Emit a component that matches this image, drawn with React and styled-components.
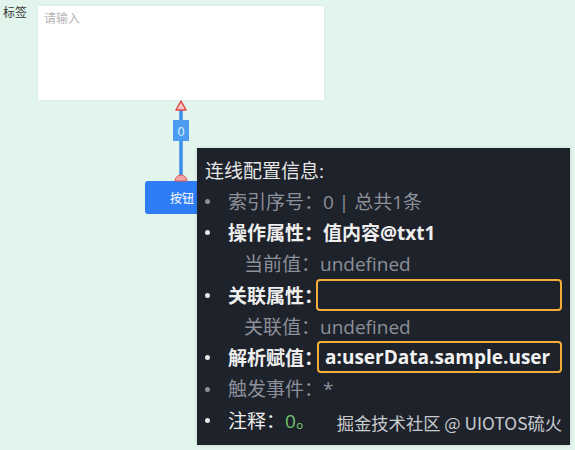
import React from 'react'
import styled, { createGlobalStyle } from 'styled-components'

const Global = createGlobalStyle`
  html, body {
    margin: 0;
    padding: 0;
    background: #e2f5ec;
  }
  body {
    font-family: "Noto Sans CJK SC", "Noto Sans", sans-serif;
  }
`

const Canvas = styled.div`
  position: relative;
  width: 575px;
  height: 450px;
  overflow: hidden;
  background: #e2f5ec;
`

const Label = styled.div`
  position: absolute;
  left: 3px;
  top: 3px;
  font-size: 12px;
  color: #333;
`

const TextArea = styled.div`
  position: absolute;
  left: 38px;
  top: 6px;
  width: 286px;
  height: 94px;
  background: #fff;
  box-shadow: 0 0 2px rgba(0, 0, 0, 0.08);
  box-sizing: border-box;
  padding: 3px 6px;
  font-size: 12px;
  color: #b5b5b5;
`

const Button = styled.div`
  position: absolute;
  left: 145px;
  top: 181px;
  width: 70px;
  height: 33px;
  border-radius: 3px;
  background: #2f7df6;
  color: #fff;
  font-size: 12px;
  display: flex;
  align-items: center;
  padding-left: 25px;
  box-sizing: border-box;
`

const Wire = styled.svg`
  position: absolute;
  left: 165px;
  top: 98px;
  overflow: visible;
`

const Tip = styled.div`
  position: absolute;
  left: 197px;
  top: 148px;
  width: 373px;
  height: 297px;
  background: #1e222b;
  box-shadow: 0 0 3px rgba(0, 0, 0, 0.15);
  box-sizing: border-box;
  padding: 8px 8px 0 8px;
  display: flex;
  flex-direction: column;
  gap: 2px;
  color: #e6e6e6;
  font-family: "Open Sans", "Noto Sans CJK SC", sans-serif;
  font-size: 19px;
`

const Title = styled.div`
  height: 27px;
  display: flex;
  align-items: center;
`

const List = styled.ul`
  list-style: none;
  margin: 0;
  padding: 0;
  display: flex;
  flex-direction: column;
`

const Item = styled.li`
  position: relative;
  height: 31.3px;
  display: flex;
  align-items: center;
  padding-left: ${p => (p.$sub ? 39 : 23)}px;
  color: ${p => (p.$muted ? '#8c9099' : '#eeeeee')};
  font-weight: ${p => (p.$bold ? 700 : 400)};
  white-space: nowrap;

  &::before {
    content: ${p => (p.$sub ? 'none' : "''")};
    position: absolute;
    left: 0;
    top: 14px;
    width: 5px;
    height: 5px;
    border-radius: 50%;
    background: ${p => (p.$muted ? '#8c9099' : '#e6e6e6')};
  }
`

const Field = styled.span`
  display: inline-flex;
  align-items: center;
  box-sizing: border-box;
  width: ${p => p.$w}px;
  height: 32px;
  margin-left: ${p => p.$ml}px;
  border: 2.5px solid #f5ae3a;
  border-radius: 4px;
  padding-left: 6px;
  font-weight: 700;
  color: #f2f2f2;
  overflow: hidden;
`

const Green = styled.span`
  color: #72c26b;
`

const Mark = styled.span`
  margin-left: auto;
  margin-top: 6px;
  font-family: "Noto Sans CJK SC", sans-serif;
  font-size: 17.3px;
  color: #c8cacd;
  font-weight: 400;
`

export default function App() {
  return (
    <>
      <Global />
      <Canvas>
        <Label>标签</Label>
        <TextArea>请输入</TextArea>
        <Button>按钮</Button>
        <Wire width="32" height="90" viewBox="0 0 32 90">
          <line x1="16" y1="6" x2="16" y2="82" stroke="#3a8de8" strokeWidth="3.5" />
          <path d="M16 3 L21 12 L11 12 Z" fill="#f7c6c6" stroke="#e04848" strokeWidth="1.5" strokeLinejoin="round" />
          <rect x="8" y="22" width="16" height="21" fill="#4b9cf0" />
          <text x="16" y="37.5" textAnchor="middle" fontSize="12" fill="#d8ecff" fontFamily="DejaVu Sans, sans-serif">0</text>
          <path d="M10 83 A6 6 0 0 1 22 83 Z" fill="#f4a6a6" stroke="#e05555" strokeWidth="1" />
        </Wire>
        <Tip>
          <Title>连线配置信息:</Title>
          <List>
            <Item $muted>索引序号：0 | 总共1条</Item>
            <Item $bold>操作属性：值内容@txt1</Item>
            <Item $sub $muted>当前值：undefined</Item>
            <Item $bold>关联属性：<Field $w={250} $ml={-7} /></Item>
            <Item $sub $muted>关联值：undefined</Item>
            <Item $bold>解析赋值：<Field $w={249} $ml={-6}>a:userData.sample.user</Field></Item>
            <Item $muted>触发事件：*</Item>
            <Item>注释：<Green>0。</Green><Mark>掘金技术社区 @ UIOTOS硫火</Mark></Item>
          </List>
        </Tip>
      </Canvas>
    </>
  )
}
